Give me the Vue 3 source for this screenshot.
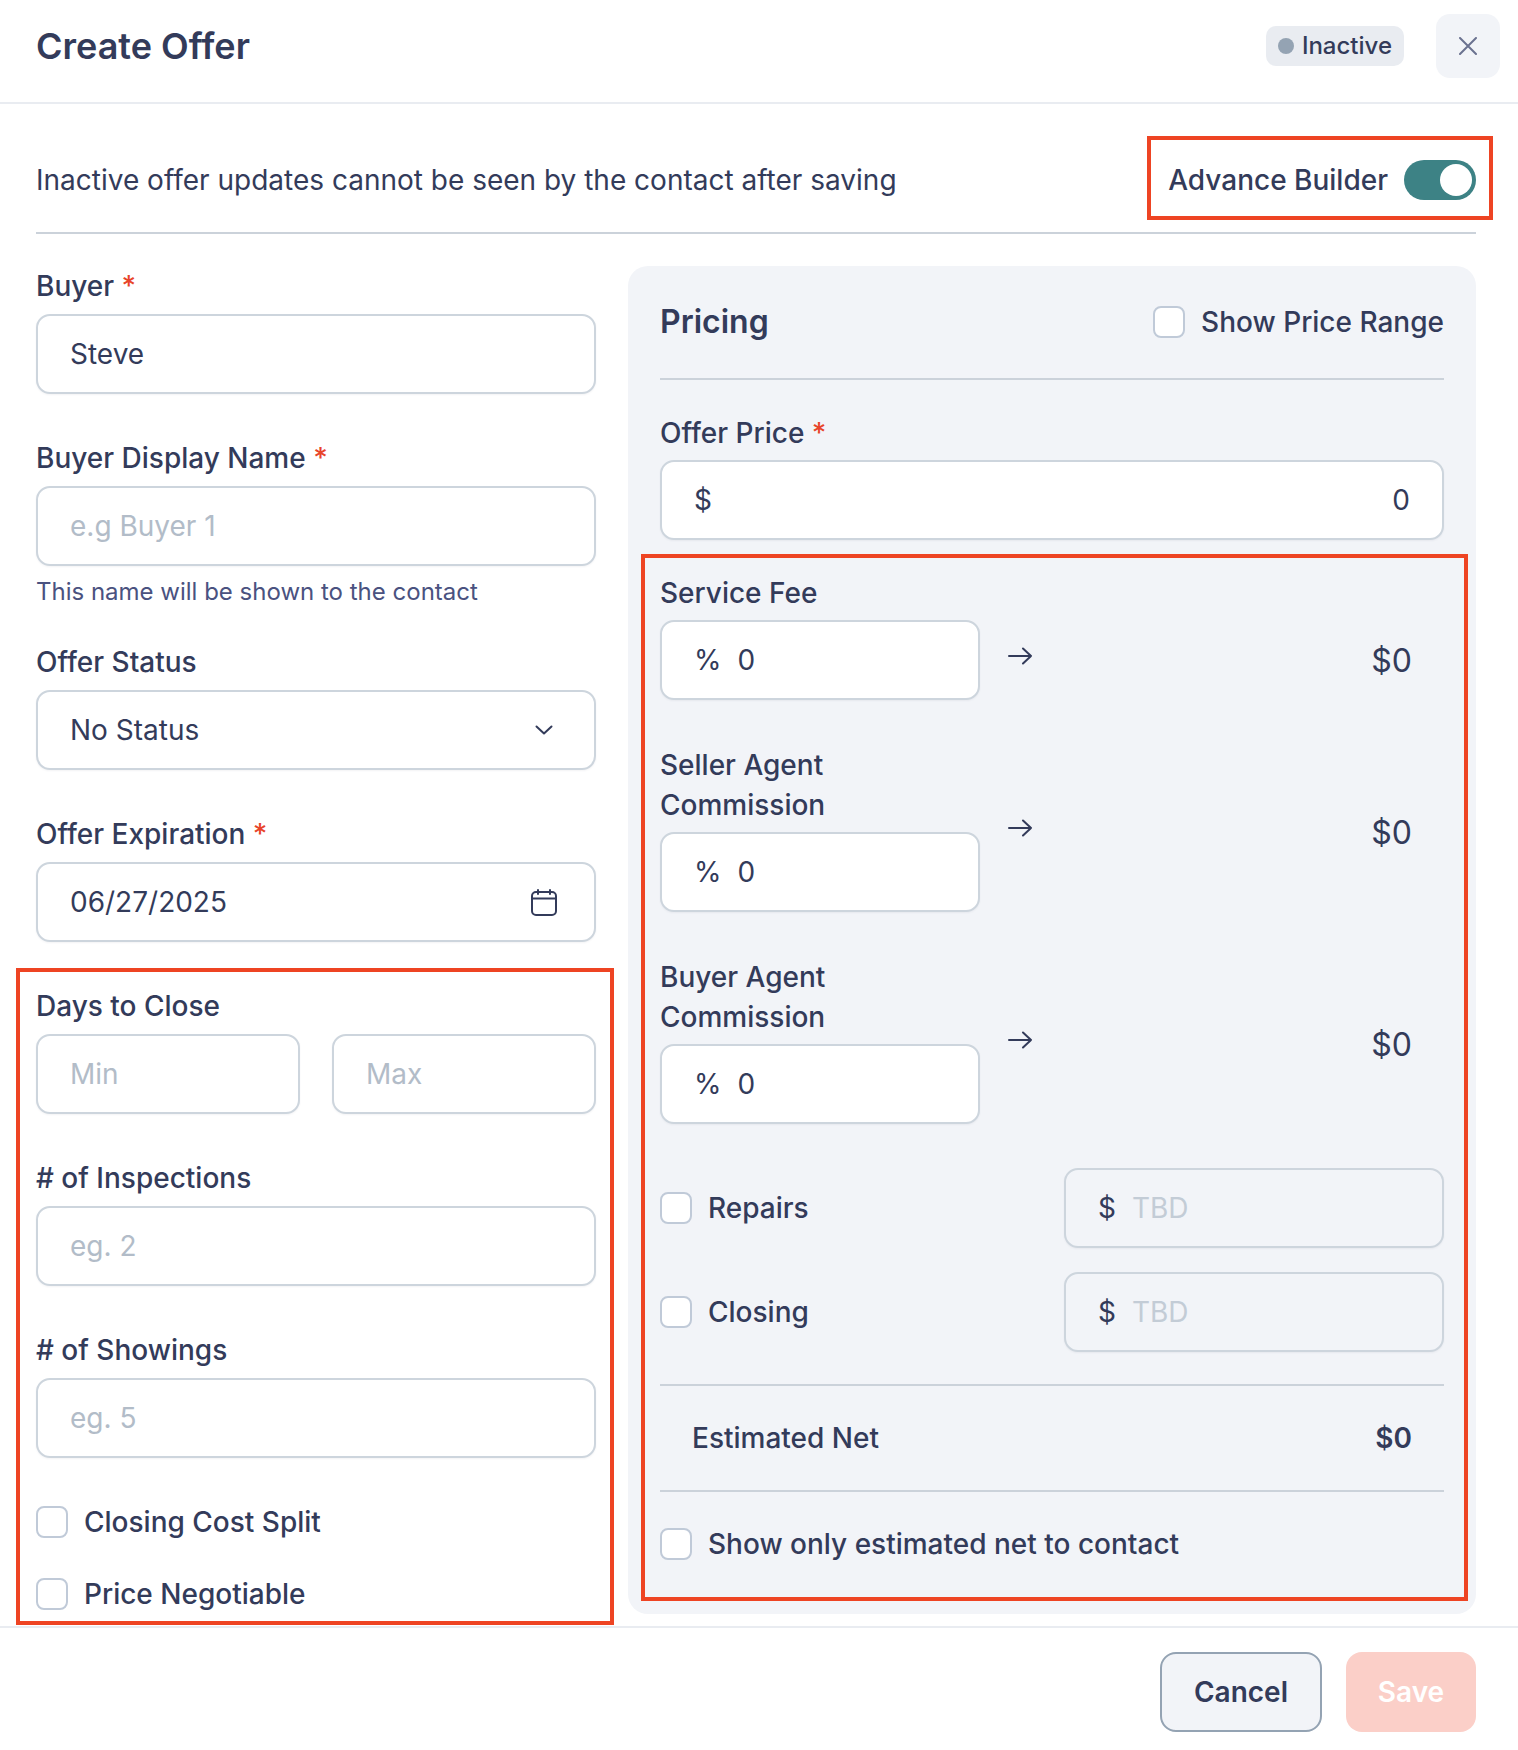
<template>
  <div class="modal">
    <header class="modal-header">
      <h1 class="title">Create Offer</h1>
      <div class="header-actions">
        <span class="badge"><i class="dot"></i>Inactive</span>
        <button class="close-btn" aria-label="Close">
          <svg width="18" height="18" viewBox="0 0 18 18" fill="none" stroke="#6b7290" stroke-width="2" stroke-linecap="round">
            <path d="M1 1L17 17M17 1L1 17" />
          </svg>
        </button>
      </div>
    </header>

    <main class="modal-body">
      <div class="info-row">
        <p class="info-text">Inactive offer updates cannot be seen by the contact after saving</p>
        <div class="builder">
          <span>Advance Builder</span>
          <span class="toggle"><i class="knob"></i></span>
        </div>
      </div>

      <div class="columns">
        <section class="left">
          <div class="field">
            <label class="label">Buyer <em>*</em></label>
            <input class="input" value="Steve" />
          </div>
          <div class="field with-hint">
            <label class="label">Buyer Display Name <em>*</em></label>
            <input class="input" placeholder="e.g Buyer 1" />
            <p class="hint">This name will be shown to the contact</p>
          </div>
          <div class="field">
            <label class="label">Offer Status</label>
            <div class="input-box">
              <span>No Status</span>
              <svg class="chevron" width="18" height="10" viewBox="0 0 18 10" fill="none" stroke="#333b5a" stroke-width="2" stroke-linecap="round" stroke-linejoin="round">
                <path d="M1.5 1.5L9 8.5L16.5 1.5" />
              </svg>
            </div>
          </div>
          <div class="field">
            <label class="label">Offer Expiration <em>*</em></label>
            <div class="input-box">
              <span>06/27/2025</span>
              <svg class="calendar" width="26" height="27" viewBox="0 0 26 27" fill="none" stroke="#333b5a" stroke-width="2" stroke-linecap="round">
                <rect x="1" y="3" width="24" height="23" rx="4" />
                <path d="M1 9.5H25M7 1V5M19 1V5" />
              </svg>
            </div>
          </div>
          <div class="field">
            <label class="label">Days to Close</label>
            <div class="min-max">
              <input class="input" placeholder="Min" />
              <input class="input" placeholder="Max" />
            </div>
          </div>
          <div class="field">
            <label class="label"># of Inspections</label>
            <input class="input" placeholder="eg. 2" />
          </div>
          <div class="field">
            <label class="label"># of Showings</label>
            <input class="input" placeholder="eg. 5" />
          </div>
          <div class="check-list">
            <label class="check"><i class="box"></i>Closing Cost Split</label>
            <label class="check"><i class="box"></i>Price Negotiable</label>
          </div>
        </section>

        <section class="pricing">
          <div class="pricing-head">
            <h2>Pricing</h2>
            <label class="check"><i class="box"></i>Show Price Range</label>
          </div>

          <div class="field offer-price">
            <label class="label">Offer Price <em>*</em></label>
            <div class="input-box">
              <span>$</span>
              <span>0</span>
            </div>
          </div>

          <div
            v-for="row in commissions"
            :key="row.name"
            class="fee-row"
            :class="{ single: row.single }"
          >
            <div class="fee-input">
              <label class="label">{{ row.name }}</label>
              <div class="input-box prefixed">
                <span class="prefix">%</span>
                <span>0</span>
              </div>
            </div>
            <div class="fee-arrow">
              <svg width="26" height="18" viewBox="0 0 26 18" fill="none" stroke="#333b5a" stroke-width="2" stroke-linecap="round" stroke-linejoin="round">
                <path d="M2 9H24M16 1.5L24 9L16 16.5" />
              </svg>
            </div>
            <div class="fee-value">$0</div>
          </div>

          <div class="cost-list">
            <div v-for="cost in costs" :key="cost" class="cost-row">
              <label class="check"><i class="box"></i>{{ cost }}</label>
              <div class="input-box prefixed tbd">
                <span class="prefix">$</span>
                <span class="muted">TBD</span>
              </div>
            </div>
          </div>

          <div class="net-row">
            <span>Estimated Net</span>
            <strong>$0</strong>
          </div>

          <div class="net-only">
            <label class="check"><i class="box"></i>Show only estimated net to contact</label>
          </div>
        </section>
      </div>
    </main>

    <footer class="modal-footer">
      <button class="btn cancel">Cancel</button>
      <button class="btn save">Save</button>
    </footer>

    <!-- red annotation boxes sitting on top of the screenshot -->
    <div class="mark mark-builder"></div>
    <div class="mark mark-left"></div>
    <div class="mark mark-right"></div>
  </div>
</template>

<script setup>
const commissions = [
  { name: 'Service Fee', single: true },
  { name: 'Seller Agent Commission' },
  { name: 'Buyer Agent Commission' }
]

const costs = ['Repairs', 'Closing']
</script>

<style>
html,
body {
  margin: 0;
  background: #fff;
}
</style>

<style scoped>
.modal {
  position: relative;
  width: 1518px;
  height: 1750px;
  display: flex;
  flex-direction: column;
  overflow: hidden;
  background: #fff;
  color: #333b5a;
  font-family: Inter, 'Noto Sans', sans-serif;
  font-size: 28px;
  line-height: 40px;
}

/* Header */
.modal-header {
  flex: none;
  height: 104px;
  box-sizing: border-box;
  padding: 14px 18px 0 36px;
  display: flex;
  justify-content: space-between;
  align-items: flex-start;
  border-bottom: 2px solid #e9ecf1;
}

.title {
  margin: 0;
  font-size: 36px;
  line-height: 64px;
  font-weight: 600;
}

.header-actions {
  display: flex;
  align-items: center;
  gap: 32px;
}

.badge {
  height: 40px;
  box-sizing: border-box;
  padding: 0 12px;
  display: flex;
  align-items: center;
  gap: 8px;
  border-radius: 10px;
  background: #e9ecf1;
  font-size: 24px;
  font-weight: 500;
}

.dot {
  width: 16px;
  height: 16px;
  border-radius: 50%;
  background: #94a3b3;
}

.close-btn {
  width: 64px;
  height: 64px;
  padding: 0;
  border: none;
  border-radius: 14px;
  background: #f2f4f8;
  display: flex;
  align-items: center;
  justify-content: center;
}

/* Body */
.modal-body {
  flex: 1;
  min-height: 0;
  overflow: hidden;
  padding: 0 42px 0 36px;
}

.info-row {
  height: 130px;
  box-sizing: border-box;
  padding-top: 24px;
  display: flex;
  align-items: center;
  justify-content: space-between;
  border-bottom: 2px solid #cbd2da;
}

.info-text {
  margin: 0;
}

.builder {
  display: flex;
  align-items: center;
  gap: 16px;
  font-weight: 500;
}

.toggle {
  position: relative;
  width: 72px;
  height: 40px;
  border-radius: 20px;
  background: #3d8285;
}

.knob {
  position: absolute;
  top: 4px;
  right: 4px;
  width: 32px;
  height: 32px;
  border-radius: 50%;
  background: #fff;
}

.columns {
  margin-top: 32px;
  display: flex;
  align-items: flex-start;
  gap: 32px;
}

.left {
  flex: none;
  width: 560px;
}

/* Fields */
.field {
  margin-bottom: 44px;
}

.field.with-hint {
  margin-bottom: 32px;
}

.label {
  display: block;
  margin-bottom: 8px;
  font-weight: 500;
}

.pricing .label {
  padding-top: 1px;
  margin-bottom: 7px;
}

.label em {
  font-style: normal;
  color: #e8442a;
}

.input,
.input-box {
  width: 100%;
  height: 80px;
  box-sizing: border-box;
  border: 2px solid #cdd5dd;
  border-radius: 14px;
  background: #fff;
  box-shadow: 0 1px 2px rgba(51, 59, 90, 0.06);
  color: #333b5a;
  font-family: inherit;
  font-size: 28px;
}

.input {
  display: block;
  padding: 0 32px;
  outline: none;
}

.input::placeholder {
  color: #b2bcc8;
  opacity: 1;
}

.input-box {
  padding: 0 32px;
  display: flex;
  align-items: center;
  justify-content: space-between;
}

.chevron {
  margin-right: 9px;
}

.calendar {
  margin-right: 5px;
}

.hint {
  margin: 8px 0 0;
  font-size: 24px;
  line-height: 36px;
  color: #4a5280;
}

.min-max {
  display: flex;
  gap: 32px;
}

.min-max .input {
  flex: 1;
  min-width: 0;
}

/* Checkboxes */
.check {
  display: flex;
  align-items: center;
  gap: 16px;
  font-weight: 500;
}

.box {
  flex: none;
  width: 32px;
  height: 32px;
  box-sizing: border-box;
  border: 2px solid #c0cad8;
  border-radius: 8px;
  background: #fff;
}

.check-list {
  display: flex;
  flex-direction: column;
  gap: 32px;
}

/* Pricing card */
.pricing {
  flex: none;
  width: 848px;
  height: 1348px;
  box-sizing: border-box;
  padding: 0 32px;
  border-radius: 20px;
  background: #f2f4f8;
}

.pricing-head {
  height: 112px;
  display: flex;
  align-items: center;
  justify-content: space-between;
  border-bottom: 2px solid #cbd2da;
}

.pricing-head h2 {
  margin: 0;
  font-size: 32px;
  line-height: 40px;
  font-weight: 600;
}

.offer-price {
  margin: 32px 0;
}

.fee-row {
  display: flex;
  margin-bottom: 44px;
}

.fee-input {
  flex: none;
  width: 320px;
}

.fee-input .label {
  width: 240px;
}

.prefixed {
  justify-content: flex-start;
  gap: 16px;
}

.prefix {
  font-weight: 400;
}

.fee-arrow {
  flex: none;
  margin-left: 27px;
  display: flex;
  align-items: center;
}

.fee-row.single .fee-arrow {
  padding-top: 40px;
}

.fee-value {
  flex: 1;
  padding: 9px 32px 0 0;
  display: flex;
  align-items: center;
  justify-content: flex-end;
  font-size: 32px;
}

.fee-row.single .fee-value {
  padding-top: 49px;
}

.cost-list {
  display: flex;
  flex-direction: column;
  gap: 24px;
}

.cost-row {
  display: flex;
  align-items: center;
  justify-content: space-between;
}

.tbd {
  width: 380px;
  background: #f2f4f8;
}

.muted {
  color: #c3ccd6;
}

.net-row {
  margin-top: 32px;
  height: 108px;
  box-sizing: border-box;
  padding: 0 32px;
  display: flex;
  align-items: center;
  justify-content: space-between;
  border-top: 2px solid #cbd2da;
  border-bottom: 2px solid #cbd2da;
  font-weight: 500;
}

.net-row strong {
  font-weight: 600;
}

.net-only {
  padding-top: 32px;
}

/* Footer */
.modal-footer {
  flex: none;
  height: 124px;
  box-sizing: border-box;
  padding: 24px 42px 0 0;
  display: flex;
  justify-content: flex-end;
  gap: 24px;
  border-top: 2px solid #e9ecf1;
}

.btn {
  height: 80px;
  box-sizing: border-box;
  border-radius: 16px;
  font-family: inherit;
  font-size: 28px;
  font-weight: 600;
}

.cancel {
  width: 162px;
  border: 2px solid #94a3b3;
  background: #f2f4f8;
  color: #333b5a;
}

.save {
  width: 130px;
  border: none;
  background: #fbcfc8;
  color: #fff;
}

/* Annotations */
.mark {
  position: absolute;
  box-sizing: border-box;
  border: 4px solid #ee4423;
  pointer-events: none;
}

.mark-builder {
  left: 1147px;
  top: 136px;
  width: 346px;
  height: 84px;
}

.mark-left {
  left: 16px;
  top: 968px;
  width: 598px;
  height: 657px;
}

.mark-right {
  left: 641px;
  top: 554px;
  width: 827px;
  height: 1047px;
}
</style>
